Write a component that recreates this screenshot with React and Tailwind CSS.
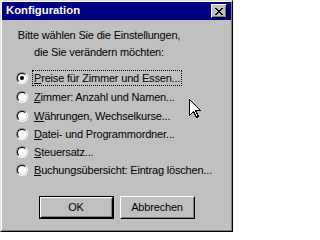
import React from "react";

const options = [
	{ key: "P", rest: "reise für Zimmer und Essen...", h: "h-[19px]" },
	{ key: "Z", rest: "immer: Anzahl und Namen...", h: "h-[19px]" },
	{ key: "W", rest: "ährungen, Wechselkurse...", h: "h-[19px]" },
	{ key: "D", rest: "atei- und Programmordner...", h: "h-[18px]" },
	{ key: "S", rest: "teuersatz...", h: "h-[18px]" },
	{ key: "B", rest: "uchungsübersicht: Eintrag löschen...", h: "h-[18px]" },
];

function Radio({ checked }) {
	return (
		<div className="w-3 h-3 shrink-0 rounded-full border border-t-[#808080] border-l-[#808080] border-r-white border-b-white">
			<div className="w-full h-full rounded-full border border-t-black border-l-black border-r-[#dfdfdf] border-b-[#dfdfdf] bg-white flex items-center justify-center">
				{checked && <div className="w-1 h-1 rounded-full bg-black" />}
			</div>
		</div>
	);
}

function Button({ label, isDefault }) {
	return (
		<button
			type="button"
			className={
				"w-[75px] h-[23px] bg-[#c0c0c0] text-[11px] tracking-[-0.18px] text-black " +
				(isDefault ? "border border-black" : "")
			}
		>
			<div className="w-full h-full border border-t-white border-l-white border-r-black border-b-black">
				<div className="w-full h-full border border-t-[#c0c0c0] border-l-[#c0c0c0] border-r-[#808080] border-b-[#808080] flex items-center justify-center">
					{label}
				</div>
			</div>
		</button>
	);
}

export default function App() {
	return (
		<div
			className="relative w-[233px] h-[232px] bg-[#c0c0c0] border border-t-[#dfdfdf] border-l-[#dfdfdf] border-r-black border-b-black"
			style={{ fontFamily: '"Liberation Sans", Arial, sans-serif' }}
		>
			<div className="h-full flex flex-col border border-t-white border-l-white border-r-[#808080] border-b-[#808080]">
				{/* title bar */}
				<div className="h-[18px] bg-[#000080] flex items-center justify-between pl-[4px] pr-[4px]">
					<span className="text-white font-bold text-[11.3px] leading-none whitespace-nowrap">Konfiguration</span>
					<div className="w-4 h-[14px] bg-[#c0c0c0] border border-t-white border-l-white border-r-black border-b-black">
						<div className="w-full h-full border border-t-[#c0c0c0] border-l-[#c0c0c0] border-r-[#808080] border-b-[#808080] flex items-center justify-center">
							<svg width="8" height="7" viewBox="0 0 8 7" shapeRendering="crispEdges">
								<path d="M0 0h2v1H0zM6 0h2v1H6zM1 1h2v1H1zM5 1h2v1H5zM2 2h4v1H2zM3 3h2v1H3zM2 4h4v1H2zM1 5h2v1H1zM5 5h2v1H5zM0 6h2v1H0zM6 6h2v1H6z" fill="black" />
							</svg>
						</div>
					</div>
				</div>

				<p className="mt-[7px] ml-[15px] w-[164px] text-center text-[11px] tracking-[-0.18px] leading-[17px] text-black whitespace-nowrap">
					Bitte wählen Sie die Einstellungen,
					<br />
					die Sie verändern möchten:
				</p>

				<div className="mt-[7px] pl-[14px] flex flex-col">
					{options.map((o, i) => (
						<div key={o.key} className={"flex items-center gap-[4px] " + o.h}>
							<Radio checked={i === 0} />
							<span
								className={
									"text-[11px] tracking-[-0.18px] leading-[12px] text-black whitespace-nowrap px-[1px] py-[1px] border border-dotted " +
									(i === 0 ? "border-black" : "border-transparent")
								}
							>
								<span className="underline underline-offset-[1px]">{o.key}</span>
								{o.rest}
							</span>
						</div>
					))}
				</div>

				<div className="mt-auto pb-[11px] flex justify-center gap-[6px]">
					<Button label="OK" isDefault />
					<Button label="Abbrechen" />
				</div>
			</div>

			{/* mouse pointer */}
			<svg className="absolute left-[188px] top-[98px]" width="12" height="19" viewBox="0 0 12 19" shapeRendering="crispEdges">
				<path d="M0.5 0.5 V16.5 L4.5 12.5 L7.5 18.5 L9.5 17.5 L6.5 11.5 H11.5 Z" fill="white" stroke="black" strokeWidth="1" />
			</svg>
		</div>
	);
}
